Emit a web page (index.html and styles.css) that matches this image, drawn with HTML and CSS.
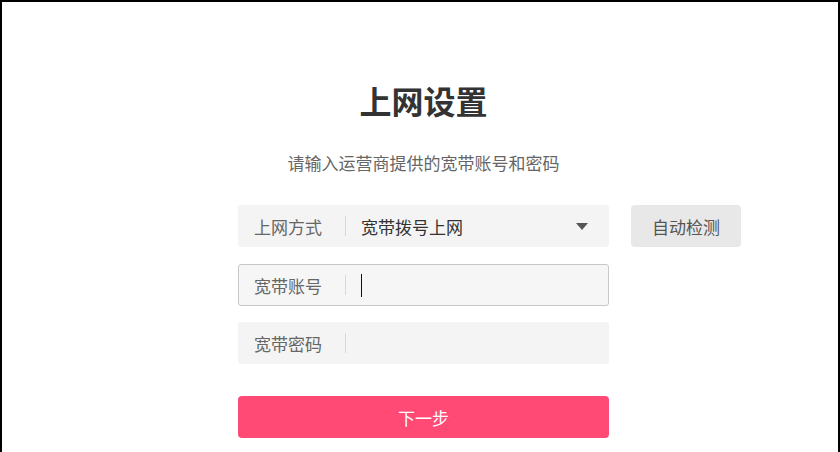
FILE: index.html
```html
<!DOCTYPE html>
<html lang="zh-CN">
  <head>
    <meta charset="UTF-8" />
    <title>上网设置</title>
    <link rel="stylesheet" href="styles.css">
  </head>
  <body>
    <div class="frame">
      <div class="setup">
        <h2>上网设置</h2>
        <p class="tip">请输入运营商提供的宽带账号和密码</p>

        <!-- 上网方式 -->
        <div class="line">
          <div class="field select">
            <span class="label">上网方式</span>
            <span class="divider"></span>
            <span class="value">宽带拨号上网</span>
            <span class="arrow"></span>
          </div>
          <button type="button" class="detect">自动检测</button>
        </div>

        <!-- 宽带账号 -->
        <div class="field active">
          <span class="label">宽带账号</span>
          <span class="divider"></span>
          <span class="caret"></span>
        </div>

        <!-- 宽带密码 -->
        <div class="field">
          <span class="label">宽带密码</span>
          <span class="divider"></span>
        </div>

        <button type="button" class="next">下一步</button>
      </div>
    </div>
  </body>
</html>
```

FILE: styles.css
```css
body {
  margin: 0;
  font-family: "Noto Sans CJK SC", "Noto Sans", sans-serif;
  background: #fff;
}

.frame {
  width: 840px;
  height: 452px;
  box-sizing: border-box;
  border: 2px solid #000;
  border-bottom: none;
  overflow: hidden;
}

.setup {
  width: 371px;
  margin-left: 236px;
  padding-top: 78px;
}

.setup h2 {
  margin: 0;
  text-align: center;
  font-size: 32px;
  line-height: 40px;
  font-weight: 700;
  color: #333;
}

.tip {
  margin: 31px 0 30px;
  text-align: center;
  font-size: 17px;
  line-height: 24px;
  color: #666;
}

.line {
  display: flex;
  gap: 22px;
  width: 371px;
}

.field {
  flex: 0 0 371px;
  width: 371px;
  height: 42px;
  box-sizing: border-box;
  display: flex;
  align-items: center;
  background: #f4f4f4;
  border-radius: 3px;
  padding-left: 16px;
  margin-bottom: 16px;
  font-size: 17px;
  position: relative;
}

.line .field {
  margin-bottom: 17px;
}

.field.active {
  border: 1px solid #c8c8c8;
  padding-left: 15px;
  background: #f6f6f6;
}

.label {
  color: #666;
  width: 68px;
}

.divider {
  width: 1px;
  height: 20px;
  background: #d8d8d8;
  margin: 0 15px 0 23px;
}

.value {
  color: #333;
}

.arrow {
  position: absolute;
  right: 21px;
  top: 18px;
  width: 0;
  height: 0;
  border-left: 6px solid transparent;
  border-right: 6px solid transparent;
  border-top: 7px solid #555;
}

.caret {
  width: 1px;
  height: 23px;
  background: #111;
}

.detect {
  flex: 0 0 110px;
  height: 42px;
  border: none;
  border-radius: 4px;
  background: #e8e8e8;
  color: #555;
  font-family: inherit;
  font-size: 17px;
  padding: 0;
}

.next {
  display: block;
  width: 371px;
  height: 42px;
  margin-top: 32px;
  border: none;
  border-radius: 4px;
  background: #ff4a75;
  color: #fff;
  font-family: inherit;
  font-size: 17px;
  padding: 0;
}
```
